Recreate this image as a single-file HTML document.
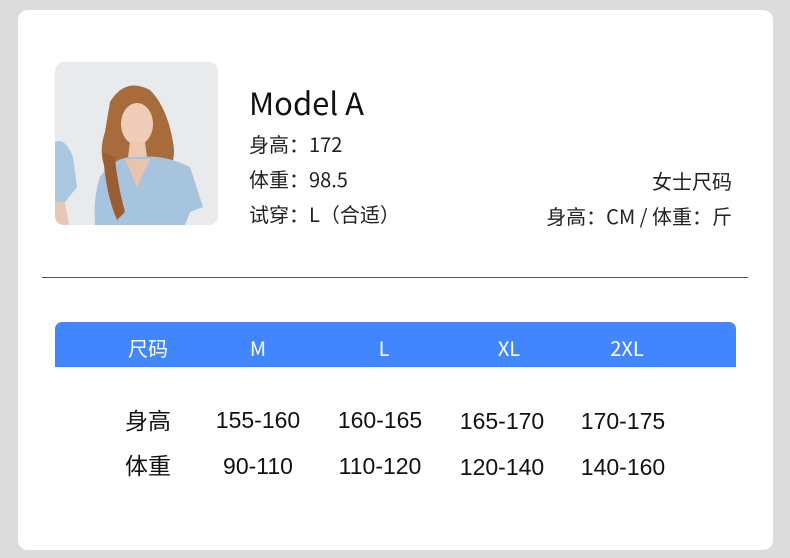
<!DOCTYPE html>
<html><head><meta charset="utf-8"><style>
body{margin:0;width:790px;height:558px;background:#dcdcdc;font-family:"Liberation Sans","Noto Sans CJK SC",sans-serif;position:relative;overflow:hidden}
.card{position:absolute;left:18px;top:10px;width:755px;height:540px;background:#fff;border-radius:10px}
.t{position:absolute;white-space:nowrap;color:#222;font-family:"Noto Sans CJK SC",sans-serif;line-height:1}
.photo{position:absolute;left:55px;top:62px;width:163px;height:163px;border-radius:9px;background:#e9eaeb;overflow:hidden}
.hl{position:absolute;left:42px;top:277px;width:706px;height:1px;background:#555}
.bar{position:absolute;left:55px;top:322px;width:681px;height:45px;background:#4286fd;border-radius:7px 7px 0 0}
.h{position:absolute;top:336px;color:#fff;font-size:20px;transform:translateX(-50%);line-height:24px;font-family:"Noto Sans CJK SC",sans-serif;font-weight:400}
.c{position:absolute;font-size:23px;color:#111;transform:translateX(-50%);line-height:28px}
.cj{font-family:"Noto Sans CJK SC",sans-serif}
</style></head><body>
<div class="card"></div>
<div class="photo">
<svg width="163" height="163" viewBox="0 0 163 163">
<path d="M0 80 Q10 75 18 95 L22 125 L10 140 L0 140Z" fill="#a9c7df"/>
<path d="M0 140 L10 140 L14 163 L0 163Z" fill="#e8c8b4"/>
<path d="M55 40 Q70 15 95 28 Q112 45 118 80 Q122 100 110 115 L60 120 Q40 100 50 70Z" fill="#a86b3c"/>
<ellipse cx="82" cy="62" rx="16" ry="21" fill="#f0cdb9"/>
<path d="M75 80 L90 80 L92 95 L73 95Z" fill="#edc7b2"/>
<path d="M45 115 Q60 93 82 95 Q110 92 135 105 L148 145 L135 150 L130 163 L40 163 Q38 135 45 115Z" fill="#a6c4de"/>
<path d="M70 97 L82 125 L95 97" fill="#e8c4af"/>
<path d="M48 90 Q50 130 62 158 L70 150 Q62 120 60 95Z" fill="#9b5e32"/>
</svg>
</div>
<div class="t" style="left:249px;top:86px;font-size:31px;color:#111;font-weight:400">Model A</div>
<div class="t" style="left:249px;top:134px;font-size:20px">身高：172</div>
<div class="t" style="left:249px;top:169px;font-size:20px">体重：98.5</div>
<div class="t" style="left:249px;top:204px;font-size:20px">试穿：L（合适）</div>
<div class="t" style="right:58px;top:171px;font-size:20px">女士尺码</div>
<div class="t" style="right:58px;top:206px;font-size:20px">身高：CM / 体重：斤</div>
<div class="hl"></div>
<div class="bar"></div>
<div class="h" style="left:148px">尺码</div>
<div class="h" style="left:258px">M</div>
<div class="h" style="left:384px">L</div>
<div class="h" style="left:509px">XL</div>
<div class="h" style="left:627px">2XL</div>
<div class="c cj" style="left:148px;top:405px">身高</div>
<div class="c" style="left:258px;top:406px">155-160</div>
<div class="c" style="left:380px;top:406px">160-165</div>
<div class="c" style="left:502px;top:407px">165-170</div>
<div class="c" style="left:623px;top:407px">170-175</div>
<div class="c cj" style="left:148px;top:450px">体重</div>
<div class="c" style="left:258px;top:452px">90-110</div>
<div class="c" style="left:380px;top:452px">110-120</div>
<div class="c" style="left:502px;top:453px">120-140</div>
<div class="c" style="left:623px;top:453px">140-160</div>
</body></html>
